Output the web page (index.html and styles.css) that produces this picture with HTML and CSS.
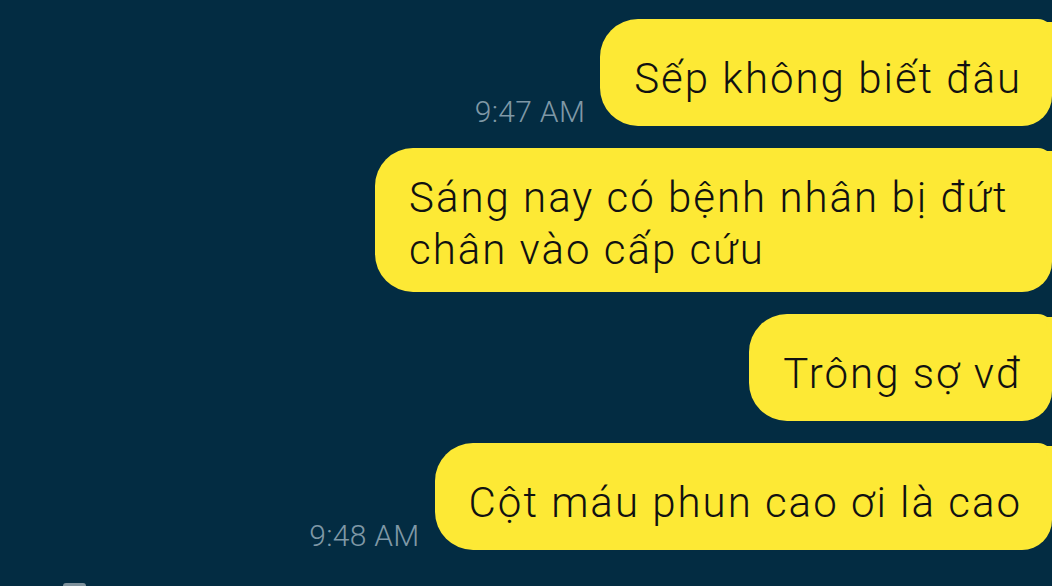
FILE: index.html
```html
<!DOCTYPE html>
<html lang="vi">
<head>
    <meta charset="UTF-8">
    <meta name="viewport" content="width=device-width, initial-scale=1.0">
    <title>Chat</title>
    <link rel="stylesheet" href="styles.css">
</head>
<body>
    <div class="chat">
        <div class="row">
            <span class="time">9:47 AM</span>
            <div class="bubble">Sếp không biết đâu</div>
        </div>
        <div class="row">
            <div class="bubble multi">Sáng nay có bệnh nhân bị đứt chân vào cấp cứu</div>
        </div>
        <div class="row">
            <div class="bubble">Trông sợ vđ</div>
        </div>
        <div class="row">
            <span class="time">9:48 AM</span>
            <div class="bubble">Cột máu phun cao ơi là cao</div>
        </div>
    </div>
    <div class="composer"><span class="composer-icon"></span></div>
</body>
</html>
```

FILE: styles.css
```css
body { margin: 0; background: #032c42; font-family: 'Roboto', 'Noto Sans', sans-serif; overflow: hidden; height: 586px; }
.chat { display: flex; flex-direction: column; gap: 22px; padding-top: 19px; }
.row { display: flex; justify-content: flex-end; align-items: flex-end; gap: 15px; }
.time { font-size: 30px; font-weight: 300; color: #7f98a6; line-height: 1; letter-spacing: 0.3px; margin-bottom: -1px; }
.bubble { position: relative; box-sizing: border-box; min-height: 107px; max-width: 677px; padding: 28px 30px 16px 34px; display: flex; align-items: center; background: #fde935; color: #111; font-size: 42px; font-weight: 300; letter-spacing: 2px; line-height: 52px; border-radius: 38px 14px 30px 38px; }
.bubble.multi { padding: 24px 30px 16px 34px; min-height: 144px; }
.bubble::after { content: ""; position: absolute; top: 3px; right: -14px; width: 20px; height: 20px; background: #fde935; border-radius: 0 0 0 16px; }
.composer { padding: 33px 0 0 63px; }
.composer-icon { display: block; width: 23px; height: 8px; background: #7e919c; border-radius: 3px; }
```
